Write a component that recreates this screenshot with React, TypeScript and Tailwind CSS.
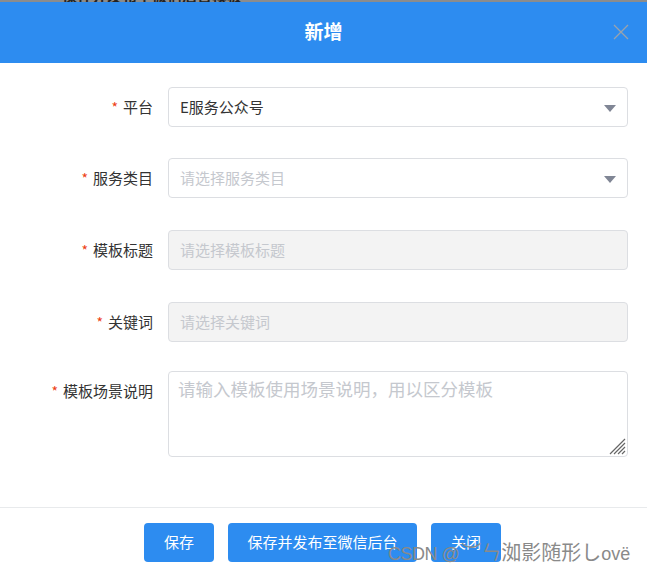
import React from "react";

const font = { fontFamily: '"Microsoft YaHei", "Noto Sans CJK SC", "Noto Sans", sans-serif' };

function Label({ text }: { text: string }) {
  return (
    <div className="w-[153px] shrink-0 flex justify-end items-center text-[15px] text-[#333]">
      <span className="text-[#ed4014] mr-[5px] text-[14px] leading-none">*</span>
      <span>{text}</span>
    </div>
  );
}

function Arrow() {
  return (
    <svg width="12" height="7" viewBox="0 0 12 7" className="absolute right-[11px] top-[17px]">
      <path d="M0 0 L12 0 L6 7 Z" fill="#808695" />
    </svg>
  );
}

export default function App() {
  return (
    <div className="relative w-[647px] h-[575px] bg-white overflow-hidden" style={font}>
      <div className="h-[2px] bg-[#8c8c8c] overflow-hidden">
        <div className="pl-[62px] -mt-[13px] text-[15px] text-[#222] font-bold leading-[18px] whitespace-nowrap">
          保存并发布至微信后台模板
        </div>
      </div>
      <div className="relative h-[61px] bg-[#2d8cf0] flex items-center justify-center">
        <span className="text-white text-[19px] font-bold -mt-[2px]">新增</span>
        <svg width="16" height="16" viewBox="0 0 16 16" className="absolute left-[613px] top-[22px]">
          <path d="M1 1 L15 15 M15 1 L1 15" stroke="#9aa3ad" strokeWidth="1.3" />
        </svg>
      </div>

      <div className="flex flex-col pt-[24px]">
        <div className="flex items-center h-[40px]">
          <Label text="平台" />
          <div className="relative ml-[15px] w-[460px] h-[40px] border border-[#dcdee2] rounded-[4px] flex items-center pl-[11px] text-[15px] text-[#333]">
            E服务公众号
            <Arrow />
          </div>
        </div>
        <div className="flex items-center h-[40px] mt-[31px]">
          <Label text="服务类目" />
          <div className="relative ml-[15px] w-[460px] h-[40px] border border-[#dcdee2] rounded-[4px] flex items-center pl-[11px] text-[15px] text-[#c5c8ce]">
            请选择服务类目
            <Arrow />
          </div>
        </div>
        <div className="flex items-center h-[40px] mt-[32px]">
          <Label text="模板标题" />
          <div className="ml-[15px] w-[460px] h-[40px] border border-[#dcdee2] bg-[#f3f3f3] rounded-[4px] flex items-center pl-[11px] text-[15px] text-[#c5c8ce]">
            请选择模板标题
          </div>
        </div>
        <div className="flex items-center h-[40px] mt-[32px]">
          <Label text="关键词" />
          <div className="ml-[15px] w-[460px] h-[40px] border border-[#dcdee2] bg-[#f3f3f3] rounded-[4px] flex items-center pl-[11px] text-[15px] text-[#c5c8ce]">
            请选择关键词
          </div>
        </div>
        <div className="flex items-start mt-[29px]">
          <div className="h-[40px] flex items-center">
            <Label text="模板场景说明" />
          </div>
          <div className="relative ml-[15px] w-[460px] h-[86px]">
            <textarea
              className="block w-full h-full resize-none border border-[#dcdee2] rounded-[4px] px-[9px] py-[4px] text-[17.5px] text-[#333] placeholder:text-[#c5c8ce] outline-none"
              style={font}
              placeholder="请输入模板使用场景说明，用以区分模板"
            />
            <svg width="20" height="20" viewBox="0 0 20 20" className="absolute right-[2px] bottom-[2px]">
              <path d="M4 19 L19 4 M8 19 L19 8 M12 19 L19 12 M16 19 L19 16" stroke="#666" strokeWidth="1.2" />
            </svg>
          </div>
        </div>
      </div>

      <div className="absolute left-0 right-0 top-[507px] border-t border-[#e8eaec]">
        <div className="flex justify-center gap-[14px] pt-[15px] pr-[2px]">
          <button className="w-[70px] h-[39px] bg-[#2d8cf0] rounded-[4px] text-white text-[15px]">保存</button>
          <button className="w-[189px] h-[39px] bg-[#2d8cf0] rounded-[4px] text-white text-[15px]">保存并发布至微信后台</button>
          <button className="w-[70px] h-[39px] bg-[#2d8cf0] rounded-[4px] text-white text-[15px]">关闭</button>
        </div>
      </div>

      <div className="absolute left-[388px] top-[540px] flex items-baseline whitespace-nowrap text-[#8a8a8a] leading-[24px]">
        <span className="text-[18px] tracking-[-0.5px]" style={{ fontFamily: '"Liberation Sans", sans-serif' }}>CSDN @</span>
        <span className="text-[20px] ml-[2px]" style={{ fontFamily: '"Noto Sans CJK SC", sans-serif' }}>︶ㄣ洳影随形し</span>
        <span className="text-[18px]" style={{ fontFamily: '"Liberation Sans", sans-serif' }}>ovë</span>
      </div>
    </div>
  );
}
